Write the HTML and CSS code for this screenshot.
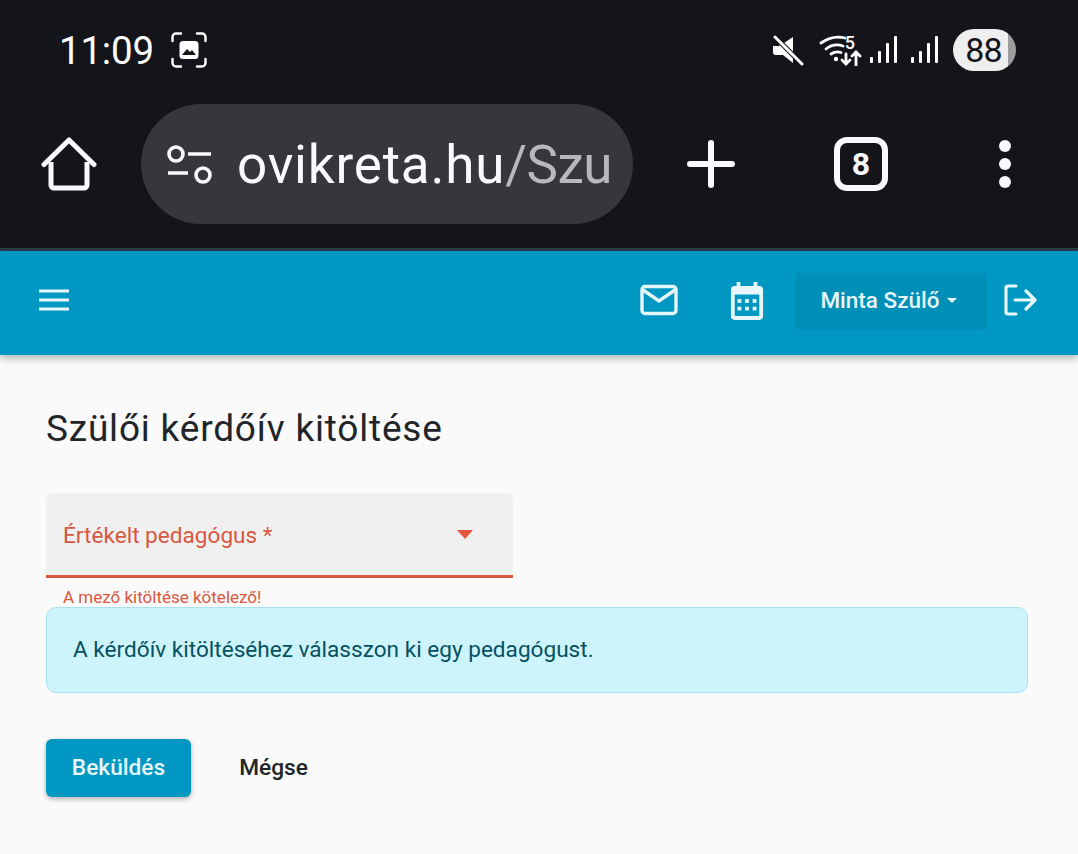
FILE: index.html
```html
<!DOCTYPE html>
<html lang="hu">
<head>
<meta charset="utf-8">
<title>Szülői kérdőív kitöltése</title>
<link rel="stylesheet" href="styles.css">
</head>
<body>
<header class="chrome">
  <div class="status">
    <span class="clock">11:09</span>
    <svg class="shot" width="36" height="36" viewBox="0 0 36 36"><g fill="none" stroke="#fff" stroke-width="2.4" stroke-linecap="round"><path d="M1.5 9V5a3.5 3.5 0 0 1 3.5-3.5h5M26 1.500h5A3.500 3.500 0 0 1 34.500 5v4M34.500 27v4a3.500 3.500 0 0 1-3.500 3.500h-5M10 34.500H5A3.500 3.500 0 0 1 1.500 31v-4"/></g><rect x="8.500" y="9" width="19" height="18" rx="3.500" fill="#fff"/><path d="M11 23l5-6 3 3 2-2 4 5z" fill="#14151b"/></svg>
    <span class="status-spacer"></span>
    <svg class="mute" width="32" height="32" viewBox="0 0 32 32"><path d="M1 12h6l2-2 12 14v5l-10-8H4a3 3 0 0 1-3-3z" fill="#fff"/><path d="M12 9l9-6v17z" fill="#fff"/><path d="M3 3l27 27" stroke="#14151b" stroke-width="5"/><path d="M3 3l27 27" stroke="#fff" stroke-width="3" stroke-linecap="round"/></svg>
    <span class="wifi">
      <svg width="44" height="32" viewBox="0 0 44 32"><g fill="none" stroke="#fff" stroke-width="2.800" stroke-linecap="round"><path d="M2 9c7-5 16-7 24-5"/><path d="M7 15c5-4 11-5 17-3"/><path d="M12 20c3-2 6-3 10-1.500"/><path d="M27 20v10M23 26l4 4 4-4"/><path d="M37 31V18M33 22l4-4 4 4"/></g><circle cx="17" cy="25" r="2.200" fill="#fff"/></svg>
      <span class="wifi-num">5</span>
    </span>
    <svg class="signal" width="28" height="32" viewBox="0 0 28 32"><g fill="#fff"><rect x="0" y="23" width="3" height="6" rx="1"/><rect x="8" y="17" width="3" height="12" rx="1"/><rect x="16" y="9" width="3" height="20" rx="1"/><rect x="24" y="2" width="3" height="27" rx="1"/></g></svg>
    <svg class="signal second" width="28" height="32" viewBox="0 0 28 32"><g fill="#fff"><rect x="0" y="23" width="3" height="6" rx="1"/><rect x="8" y="17" width="3" height="12" rx="1"/><rect x="16" y="9" width="3" height="20" rx="1"/><rect x="24" y="2" width="3" height="27" rx="1"/></g></svg>
    <span class="battery">88</span>
  </div>
  <div class="browser">
    <svg class="home" width="56" height="56" viewBox="0 0 56 56"><path d="M3 28.500L28 4l25 24.500" fill="none" stroke="#faf9fd" stroke-width="5" stroke-linecap="round" stroke-linejoin="round"/><path d="M10 26v23a3 3 0 0 0 3 3h30a3 3 0 0 0 3-3V26" fill="none" stroke="#faf9fd" stroke-width="5"/></svg>
    <div class="omnibox">
      <svg class="tune" width="46" height="40" viewBox="0 0 46 40"><g fill="none" stroke="#faf9fd" stroke-width="3.600"><circle cx="9" cy="10" r="7"/><circle cx="36" cy="31" r="7"/><path d="M21 10h23M1 29h20"/></g></svg>
      <span class="url">ovikreta.hu<span class="url-path">/Szu</span></span>
    </div>
    <svg class="plus" width="48" height="48" viewBox="0 0 48 48"><path d="M3 24h42M24 3v42" stroke="#faf9fd" stroke-width="6" stroke-linecap="round"/></svg>
    <span class="tabs">8</span>
    <span class="dots"><i></i><i></i><i></i></span>
  </div>
</header>

<nav class="appbar">
  <svg class="menu" width="32" height="32" viewBox="0 0 32 32"><path d="M1 7h30M1 16h30M1 25h30" stroke="#e6f6fb" stroke-width="3"/></svg>
  <span class="appbar-spacer"></span>
  <svg class="mail" width="40" height="32" viewBox="0 0 40 32"><rect x="2" y="2.500" width="34" height="27" rx="3" fill="none" stroke="#e6f6fb" stroke-width="3.400"/><path d="M3 6l16 11L35 6" fill="none" stroke="#e6f6fb" stroke-width="3.400"/></svg>
  <svg class="calendar" width="34" height="38" viewBox="0 0 36 40"><path d="M7 0h4v4h14V0h4v4h2a4 4 0 0 1 4 4v28a4 4 0 0 1-4 4H5a4 4 0 0 1-4-4V8a4 4 0 0 1 4-4h2z" fill="#e6f6fb"/><rect x="5" y="13" width="26" height="23" rx="1" fill="#0098c2"/><g fill="#e6f6fb"><rect x="8" y="18" width="4" height="4"/><rect x="16" y="18" width="4" height="4"/><rect x="24" y="18" width="4" height="4"/><rect x="8" y="26" width="4" height="4"/><rect x="16" y="26" width="4" height="4"/><rect x="24" y="26" width="4" height="4"/></g></svg>
  <button class="user" type="button">Minta Szülő<i class="caret"></i></button>
  <svg class="logout" width="36" height="32" viewBox="0 0 36 32"><g fill="none" stroke="#e6f6fb" stroke-width="3.200" stroke-linejoin="round" stroke-linecap="round"><path d="M12 2H4a2 2 0 0 0-2 2v24a2 2 0 0 0 2 2h8"/><path d="M11 16h20M22 7l9 9-9 9"/></g></svg>
</nav>

<main class="content">
  <h1 class="title">Szülői kérdőív kitöltése</h1>
  <div class="field">
    <div class="select">
      <span class="select-label">Értékelt pedagógus *</span>
      <i class="select-arrow"></i>
    </div>
    <p class="field-error">A mező kitöltése kötelező!</p>
  </div>
  <div class="alert">A kérdőív kitöltéséhez válasszon ki egy pedagógust.</div>
  <div class="actions">
    <button class="btn btn-primary" type="button">Beküldés</button>
    <button class="btn btn-text" type="button">Mégse</button>
  </div>
</main>
</body>
</html>
```

FILE: styles.css
```css
* { box-sizing: border-box; }
html, body { margin: 0; padding: 0; }
body {
  width: 1078px;
  height: 854px;
  overflow: hidden;
  background: #fafafa;
  font-family: Roboto, "Liberation Sans", sans-serif;
  color: #212529;
}
svg { display: block; flex: none; }

/* phone chrome */
.chrome { background: #14151b; border-bottom: 3px solid #2b3c4a; height: 251px; }
.status { height: 100px; display: flex; align-items: center; padding: 0 62px 0 59px; color: #fff; }
.clock { font-size: 38.5px; line-height: 46px; letter-spacing: -0.2px; margin-top: 1px; }
.shot { margin-left: 17px; }
.status-spacer { flex: 1; }
.mute { margin-right: 15px; }
.wifi { position: relative; width: 44px; height: 32px; margin-right: 7px; }
.wifi-num { position: absolute; right: 8px; top: 0; font-size: 18px; line-height: 18px; font-weight: 500; color: #fff; }
.signal { margin-right: 13px; }
.signal.second { margin-right: 14px; }
.battery {
  width: 63px; height: 42px; border-radius: 21px;
  background: linear-gradient(90deg, #eeeeef 0, #eeeeef 88%, #9c9c9e 88%, #9c9c9e 100%);
  color: #14151b; font-size: 34px; font-weight: 400; letter-spacing: -0.8px; line-height: 42px; text-align: center; padding-right: 2px;
}
.browser { height: 148px; padding: 4px 0 0 41px; display: flex; align-items: flex-start; }
.home { margin-top: 32px; }
.omnibox {
  width: 492px; height: 120px; margin-left: 44px; border-radius: 60px; background: #36373c;
  display: flex; align-items: center; padding-left: 26px; overflow: hidden;
}
.url { margin: 2px 0 0 24px; font-size: 53px; letter-spacing: 0.8px; line-height: 62px; color: #faf9fd; white-space: nowrap; }
.url-path { color: #b7b8bd; letter-spacing: -0.5px; }
.plus { margin: 36px 0 0 54px; }
.tabs {
  width: 54px; height: 54px; margin: 33px 0 0 99px; border: 6px solid #faf9fd; border-radius: 13px;
  color: #faf9fd; font-size: 32px; font-weight: 700; line-height: 42px; text-align: center;
}
.dots { margin: 36px 0 0 111px; display: flex; flex-direction: column; gap: 6px; }
.dots i { display: block; width: 12px; height: 12px; border-radius: 50%; background: #faf9fd; }

/* app bar */
.appbar {
  height: 104px; background: #0098c2; display: flex; align-items: center;
  padding: 0 38px 6px 38px; box-shadow: 0 3px 8px rgba(0,0,0,.3); position: relative;
}
.appbar-spacer { flex: 1; }
.mail { margin-right: 50px; }
.calendar { margin-right: 31px; margin-top: 2px; }
.user {
  width: 192px; height: 57px; margin-top: 2px; background: #008fb7; border: 0; border-radius: 4px; color: #e6f6fb;
  font: 500 22.500px/53px Roboto, sans-serif; padding: 0 5px 2px 0; display: flex; align-items: center; justify-content: center;
}
.caret { width: 0; height: 0; margin-left: 7px; border: 5px solid transparent; border-top-color: #e6f6fb; border-bottom: 0; }
.logout { margin-left: 17px; }

/* content */
.content { padding: 48px 50px 0 46px; }
.title { margin: 0; font-size: 37px; letter-spacing: 0.8px; line-height: 52px; font-weight: 400; color: #212529; }
.field { width: 467px; margin-top: 38px; }
.select {
  height: 85px; background: #f0f0f0; border-radius: 6px 6px 0 0; border-bottom: 3px solid #dc5840;
  display: flex; align-items: center; justify-content: space-between; padding: 0 40px 0 17px;
}
.select-label { font-size: 22.600px; line-height: 28px; color: #d9573f; margin-top: 3px; }
.select-arrow { width: 0; height: 0; border: 8px solid transparent; border-top: 9px solid #e4553a; border-bottom: 0; }
.field-error { margin: 10px 0 0 17px; font-size: 17px; line-height: 19px; height: 19px; color: #d9573f; }
.alert {
  height: 86px; margin-top: 0; padding: 0 26px; background: #cdf4fd; border: 1px solid #a9e3f1; border-radius: 10px;
  color: #055160; font-size: 22.600px; line-height: 84px;
}
.actions { display: flex; margin-top: 46px; align-items: center; }
.btn { height: 58px; border: 0; padding: 0; font: 500 22.700px/58px Roboto, sans-serif; }
.btn-primary { width: 145px; background: #0098c2; color: #e6f6fb; border-radius: 6px; box-shadow: 0 2px 5px rgba(0,0,0,.3); }
.btn-text { width: 117px; margin-left: 24px; background: none; color: #212529; }
```
